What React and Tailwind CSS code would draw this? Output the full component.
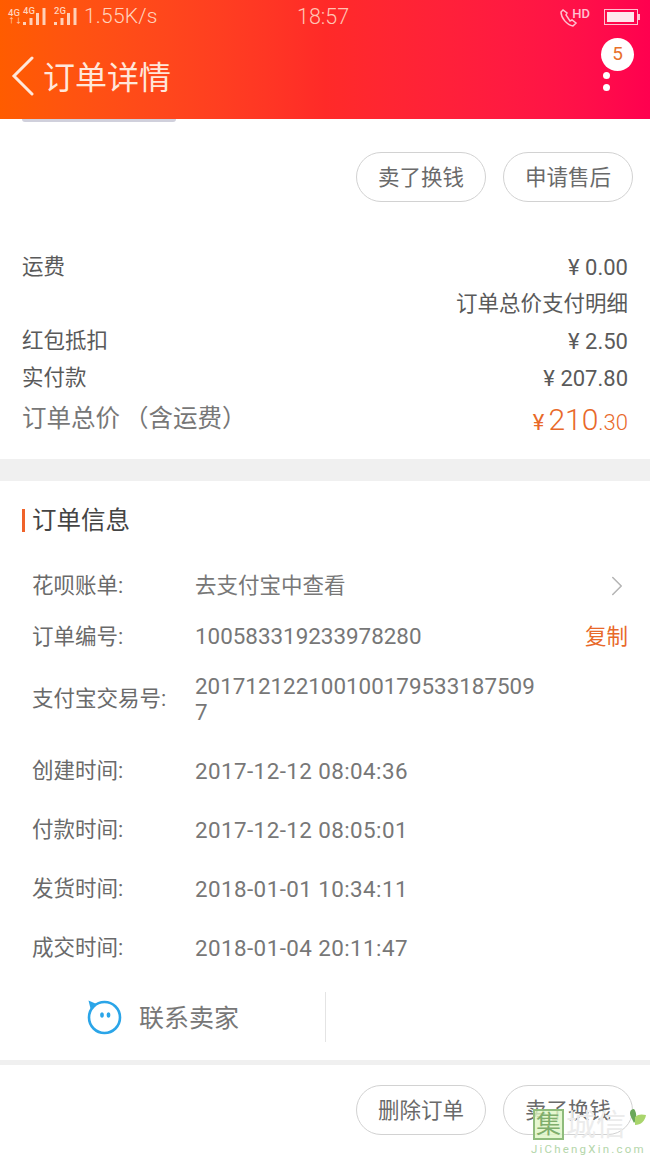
import { ChevronRight } from 'lucide-react';

const font = "font-['Roboto','Noto_Sans_CJK_SC',sans-serif]";

const fees = [
  ['红包抵扣', '¥ 2.50'],
  ['实付款', '¥ 207.80'],
];

const timeRows = [
  ['创建时间:', '2017-12-12 08:04:36'],
  ['付款时间:', '2017-12-12 08:05:01'],
  ['发货时间:', '2018-01-01 10:34:11'],
  ['成交时间:', '2018-01-04 20:11:47'],
];

function Signal({ label, className = '' }) {
  return (
    <div className={`relative h-[20px] w-[23px] shrink-0 ${className}`}>
      <svg width="23" height="20" viewBox="0 0 23 20" fill="#ffd0b8">
        <rect x="0" y="15" width="3" height="3" />
        <rect x="6.5" y="11" width="3" height="7" />
        <rect x="13" y="6" width="3" height="12" />
        <rect x="19.5" y="1" width="3" height="17" />
      </svg>
      <span className="absolute left-0 top-[-1px] text-[9.5px] font-medium leading-[10px]">{label}</span>
    </div>
  );
}

function StatusBar() {
  return (
    <div className="flex h-[34px] items-center pl-2 pr-[10px] text-[#ffd2bc]">
      <div className="flex w-[289px] items-center">
        <div className="flex w-[15px] flex-col self-start pt-[7px] text-[9.5px] font-medium leading-[10px]">
          <span className="whitespace-nowrap">4G</span>
          <span className="whitespace-nowrap text-[7px] leading-[7px]">↑↓</span>
        </div>
        <Signal label="4G" />
        <Signal label="2G" className="ml-[8px]" />
        <span className="ml-[7px] text-[21px] font-light tracking-[0.2px]">1.55K/s</span>
      </div>
      <span className="text-[21.5px] font-light text-[#ffc4b4]">18:57</span>
      <div className="ml-auto flex items-center gap-[14px] text-[#ffc0d0]">
        <div className="flex items-start">
          <svg width="18" height="19" viewBox="0 0 18 19" fill="none" stroke="currentColor" strokeWidth="1.5">
            <path d="M3 2 1 4c0 6 6 13 12 14l3-3-4-3-2 1-4-6 1-2z" />
          </svg>
          <span className="-ml-[6px] text-[13px] font-medium leading-[12px]">HD</span>
        </div>
        <div className="flex items-center">
          <div className="h-[16px] w-[34px] border border-[#ffc0d0] p-[2px]">
            <div className="h-full w-[27px] bg-[#ffe6ec]" />
          </div>
          <div className="h-[6px] w-0.5 bg-[#ffc0d0]" />
        </div>
      </div>
    </div>
  );
}

function Pill({ children }) {
  return (
    <button className="flex h-[50px] w-[130px] items-center justify-center rounded-full border border-[#d2d2d2] pt-[2px] text-[21.5px] text-[#6a6a6a]">
      {children}
    </button>
  );
}

function ChatIcon() {
  return (
    <svg width="36" height="36" viewBox="0 0 36 36" fill="none">
      <circle cx="18.5" cy="18.5" r="15.5" stroke="#2ba5e8" strokeWidth="2.6" />
      <path d="M2.5 1.5l8 3.5-6 4.5z" fill="#2ba5e8" />
      <ellipse cx="16" cy="16" rx="1.9" ry="2.7" fill="#2ba5e8" />
      <ellipse cx="22.5" cy="16" rx="1.9" ry="2.7" fill="#2ba5e8" />
    </svg>
  );
}

function InfoRow({ label, className = '', children }) {
  return (
    <div className={`flex items-center pl-[32px] pr-[22px] ${className}`}>
      <span className="w-[163px] shrink-0 text-[21.5px] text-[#6a6a6a]">{label}</span>
      {children}
    </div>
  );
}

export default function App() {
  return (
    <div className={`relative h-[1155px] w-[650px] overflow-hidden bg-white ${font}`}>
      <header className="h-[119px] bg-gradient-to-r from-[#ff5c00] via-[#ff2a28] via-50% to-[#ff004f]">
        <StatusBar />
        <div className="relative flex h-[85px] items-start pl-[11px] pr-[40px] pt-[22px]">
          <svg width="24" height="40" viewBox="0 0 24 40" fill="none" stroke="#ffe7da" strokeWidth="3" strokeLinecap="round">
            <path d="M21 2 3 20l18 18" />
          </svg>
          <h1 className="ml-2 text-[32px] leading-[44px] text-[#ffe7da]">订单详情</h1>
          <div className="ml-auto mt-[16px] flex flex-col items-center gap-[5px]">
            <span className="h-[7px] w-[7px] rounded-full bg-white" />
            <span className="h-[7px] w-[7px] rounded-full bg-white" />
          </div>
          <span className="absolute right-[16px] top-[4px] flex h-[33px] w-[33px] items-center justify-center rounded-full bg-white text-[19px] text-[#e8702a]">5</span>
        </div>
      </header>

      <div className="ml-[22px] h-[3px] w-[154px] rounded-b bg-[#d0d0dc]" />

      <div className="mt-[30px] flex justify-end gap-[17px] pr-[17px]">
        <Pill>卖了换钱</Pill>
        <Pill>申请售后</Pill>
      </div>

      <div className="mt-[47px] px-[22px] text-[21.5px] text-[#5a5a5a]">
        <div className="flex h-[37px] items-center justify-between">
          <span>运费</span>
          <span className="text-[22px]">¥ 0.00</span>
        </div>
        <div className="flex h-[37px] items-center justify-end">订单总价支付明细</div>
        {fees.map(([label, value]) => (
          <div key={label} className="flex h-[37px] items-center justify-between">
            <span>{label}</span>
            <span className="text-[22px]">{value}</span>
          </div>
        ))}
        <div className="flex h-[44px] items-center justify-between pt-px text-[#777777]">
          <span className="text-[24.5px]">
            订单总价<span className="ml-[4px]">（含运费）</span>
          </span>
          <span className="flex items-baseline text-[#e8692a]">
            <span className="text-[22px]">¥</span>
            <span className="ml-[4px] text-[30px] font-light">210</span>
            <span className="text-[22px] font-light">.30</span>
          </span>
        </div>
      </div>

      <div className="mt-[18px] h-[22px] bg-[#f0f0f0]" />

      <div className="mt-[28px] ml-[22px] flex h-[23px] items-center">
        <span className="h-[23px] w-[3px] bg-[#f0632a]" />
        <h2 className="ml-[7px] pt-px text-[24.5px] text-[#444444]">订单信息</h2>
      </div>

      <InfoRow label="花呗账单:" className="mt-[34px] h-[40px]">
        <span className="text-[21.5px] text-[#777777]">去支付宝中查看</span>
        <ChevronRight className="-mr-[6px] ml-auto text-[#b5b5b5]" size={34} strokeWidth={1.1} />
      </InfoRow>
      <InfoRow label="订单编号:" className="h-[62px]">
        <span className="text-[22.4px] text-[#777777]">100583319233978280</span>
        <span className="ml-auto text-[21.5px] text-[#e8692a]">复制</span>
      </InfoRow>
      <InfoRow label="支付宝交易号:" className="h-[62px]">
        <span className="w-[345px] break-all text-[22.4px] leading-[26px] text-[#777777]">2017121221001001795331875097</span>
      </InfoRow>
      <div className="mt-[12px]">
        {timeRows.map(([label, value]) => (
          <InfoRow key={label} label={label} className="h-[59px]">
            <span className="text-[22.4px] tracking-[0.42px] text-[#777777]">{value}</span>
          </InfoRow>
        ))}
      </div>

      <div className="mt-[14px] flex h-[50px] w-[326px] items-center border-r border-[#e4e4e4] pl-[86px]">
        <ChatIcon />
        <span className="ml-[17px] pt-[3px] text-[25px] text-[#777777]">联系卖家</span>
      </div>

      <div className="mt-[18px] h-[5px] bg-[#f0f0f0]" />

      <div className="mt-[20px] flex justify-end gap-[17px] pr-[17px]">
        <Pill>删除订单</Pill>
        <Pill>卖了换钱</Pill>
      </div>

      <div className="absolute left-[531px] top-[1109px] w-[119px]">
        <div className="flex items-start">
          <span className="ml-[2px] flex h-[31px] w-[31px] items-center justify-center border-2 border-[#8fbc7c] bg-[#dff5c4]/80 text-[25px] leading-none text-[#7fae6c]">集</span>
          <span className="ml-[2px] text-[30px] leading-[32px] text-[#ececec]">城信</span>
          <svg className="absolute left-[98px] top-[-1px]" width="18" height="20" viewBox="0 0 18 20">
            <path d="M5 1C1 1 0 5 2 9l3 6c3-4 3-10 0-14z" fill="#6aa85a" />
            <path d="M6 9c3-3 7-3 11-2-1 6-5 10-11 10z" fill="#a9d56c" />
          </svg>
        </div>
        <div className="mt-[2px] whitespace-nowrap text-[11.5px] leading-[12px] tracking-[2.2px] text-[#b4d6aa]">JiChengXin.com</div>
      </div>
    </div>
  );
}
